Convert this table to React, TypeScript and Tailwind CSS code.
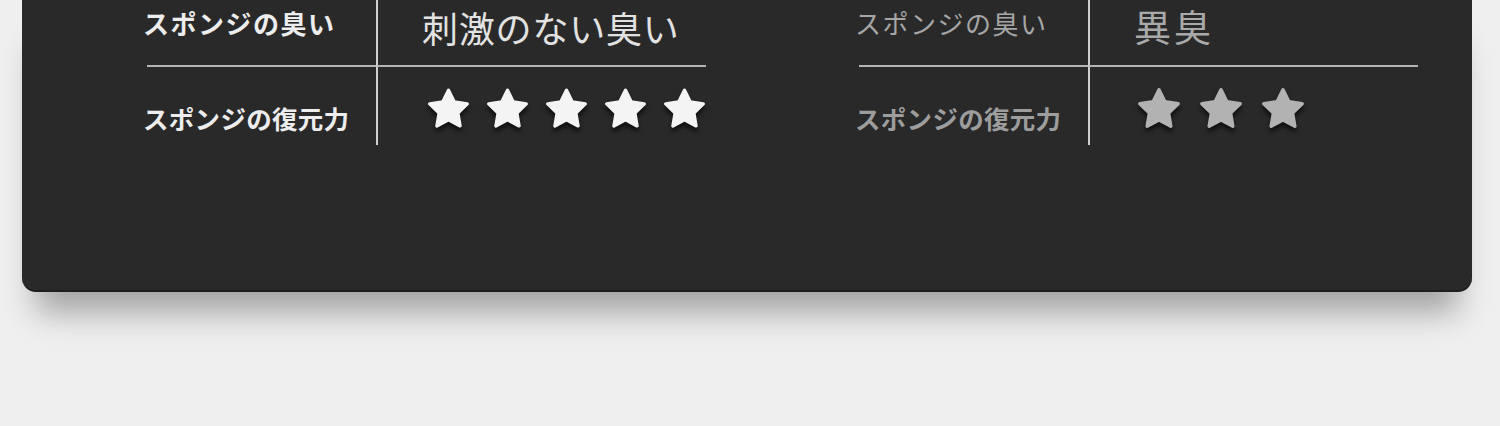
const STAR = '12,2 15.09,8.26 22,9.27 17,14.14 18.18,21.02 12,17.77 5.82,21.02 7,14.14 2,9.27 8.91,8.26';

function Star({ color }: { color: string }) {
  return (
    <svg viewBox="0 0 24 24" className="w-[46px] h-[46px] -mx-[1px] drop-shadow-[0_4px_2px_rgba(0,0,0,0.6)]">
      <polygon points={STAR} fill={color} stroke={color} strokeWidth="1.8" strokeLinejoin="round" />
    </svg>
  );
}

type Props = {
  value: string;
  stars: number;
  starColor: string;
  valueClass: string;
  smellLabelClass: string;
  recoverLabelClass: string;
  starPad: string;
  starGap: string;
};

function SpecTable({ value, stars, starColor, valueClass, smellLabelClass, recoverLabelClass, starPad, starGap }: Props) {
  return (
    <div className="grid grid-cols-[233px_330px] grid-rows-[67px_78px]">
      {/* row 1 */}
      <div className="flex items-center pb-[19px] border-b-2 border-[#b4b4b4] ml-[4px]">
        <span className={`-ml-[4px] text-[26px] leading-[1.3] ${smellLabelClass}`}>スポンジの臭い</span>
      </div>
      <div className="flex items-center pb-[11px] pl-[44px] border-l-2 border-b-2 border-l-[#cfcfcf] border-b-[#b4b4b4]">
        <span className={`leading-normal ${valueClass}`}>{value}</span>
      </div>

      {/* row 2 */}
      <div className="flex items-center pt-[24px]">
        <span className={`text-[25.5px] leading-[1.3] font-bold tracking-[0.3px] ${recoverLabelClass}`}>スポンジの復元力</span>
      </div>
      <div className={`flex items-center pt-[6px] border-l-2 border-[#cfcfcf] ${starPad} ${starGap}`}>
        {Array.from({ length: stars }).map((_, i) => (
          <Star key={i} color={starColor} />
        ))}
      </div>
    </div>
  );
}

export default function App() {
  return (
    <div
      className="w-[1500px] h-[426px] bg-[#efefef] overflow-hidden"
      style={{ fontFamily: '"Noto Sans CJK JP", "Noto Sans", sans-serif' }}
    >
      <div className="ml-[22px] w-[1450px] h-[292px] bg-[#292929] rounded-b-[14px] shadow-[0_34px_30px_-14px_rgba(0,0,0,0.32)] border-b-2 border-[#1e1e1e]">
        <div className="flex gap-[149px] pl-[121px]">
          <SpecTable
            value="刺激のない臭い"
            stars={5}
            starColor="#f4f4f4"
            valueClass="text-[36px] text-[#e2e2e2] tracking-[0.8px]"
            smellLabelClass="font-bold text-[#ededed] tracking-[1.5px]"
            recoverLabelClass="text-[#ededed]"
            starPad="pl-[49px]"
            starGap="gap-[16px]"
          />
          <SpecTable
            value="異臭"
            stars={3}
            starColor="#b2b2b2"
            valueClass="text-[37px] text-[#a9a9a9] tracking-[3px]"
            smellLabelClass="text-[#a6a6a6] tracking-[1.5px]"
            recoverLabelClass="text-[#9d9d9d]"
            starPad="pl-[47px]"
            starGap="gap-[18px]"
          />
        </div>
      </div>
    </div>
  );
}
